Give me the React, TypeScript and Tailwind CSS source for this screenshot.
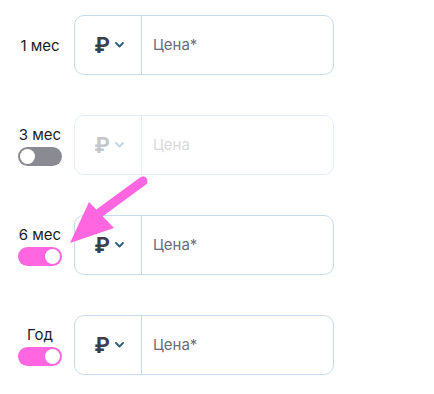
import React from 'react';

type Row = {
  label: string;
  toggle?: 'on' | 'off';
  disabled?: boolean;
};

const rows: Row[] = [
  { label: '1 мес' },
  { label: '3 мес', toggle: 'off', disabled: true },
  { label: '6 мес', toggle: 'on' },
  { label: 'Год', toggle: 'on' },
];

function Toggle({ on }: { on: boolean }) {
  return (
    <div
      className={`mt-[3px] flex h-[19px] w-[44px] items-center rounded-full px-[2px] ${
        on ? 'justify-end bg-[#ff66e0]' : 'justify-start bg-[#8a8a92]'
      }`}
    >
      <div className="h-[15px] w-[15px] rounded-full bg-white" />
    </div>
  );
}

function PriceField({ disabled }: { disabled?: boolean }) {
  return (
    <div
      className={`flex h-[60px] w-[260px] rounded-[10px] border ${
        disabled ? 'border-[#e3eef7]' : 'border-[#c6dcee]'
      }`}
    >
      <div
        className={`flex w-[67px] items-center justify-center gap-[5px] border-r pl-[2px] ${
          disabled ? 'border-[#e3eef7]' : 'border-[#c6dcee]'
        }`}
      >
        <span
          className={`text-[21px] font-bold leading-none ${
            disabled ? 'text-[#c4c6cb]' : 'text-[#3b3f4a]'
          }`}
        >
          ₽
        </span>
        <svg width="9" height="6" viewBox="0 0 9 6" fill="none">
          <path
            d="M1 1l3.5 3.5L8 1"
            stroke={disabled ? '#c3d4e2' : '#2f5c7d'}
            strokeWidth="1.8"
            strokeLinecap="round"
            strokeLinejoin="round"
          />
        </svg>
      </div>
      <div
        className={`flex items-center pl-[11px] text-[15px] ${
          disabled ? 'text-[#d9dadd]' : 'text-[#6b6e76]'
        }`}
      >
        {disabled ? 'Цена' : 'Цена*'}
      </div>
    </div>
  );
}

export default function App() {
  return (
    <div
      className="relative min-h-screen bg-white pl-[18px] pt-[15px]"
      style={{ fontFamily: 'Inter, "Noto Sans", sans-serif' }}
    >
      <div className="flex flex-col gap-[40px]">
        {rows.map((row) => (
          <div key={row.label} className="flex items-center gap-[12px]">
            <div className="flex w-[44px] flex-col items-center pt-[2px]">
              <span className="text-[15px] leading-[18px] text-[#1d1d1f]">{row.label}</span>
              {row.toggle && <Toggle on={row.toggle === 'on'} />}
            </div>
            <PriceField disabled={row.disabled} />
          </div>
        ))}
      </div>

      <svg
        className="pointer-events-none absolute left-0 top-0"
        width="434"
        height="394"
        viewBox="0 0 434 394"
      >
        <line
          x1="143"
          y1="181"
          x2="98"
          y2="214"
          stroke="#ff66e0"
          strokeWidth="9"
          strokeLinecap="round"
        />
        <polygon points="70,243 89,202 114,228" fill="#ff66e0" />
      </svg>
    </div>
  );
}
